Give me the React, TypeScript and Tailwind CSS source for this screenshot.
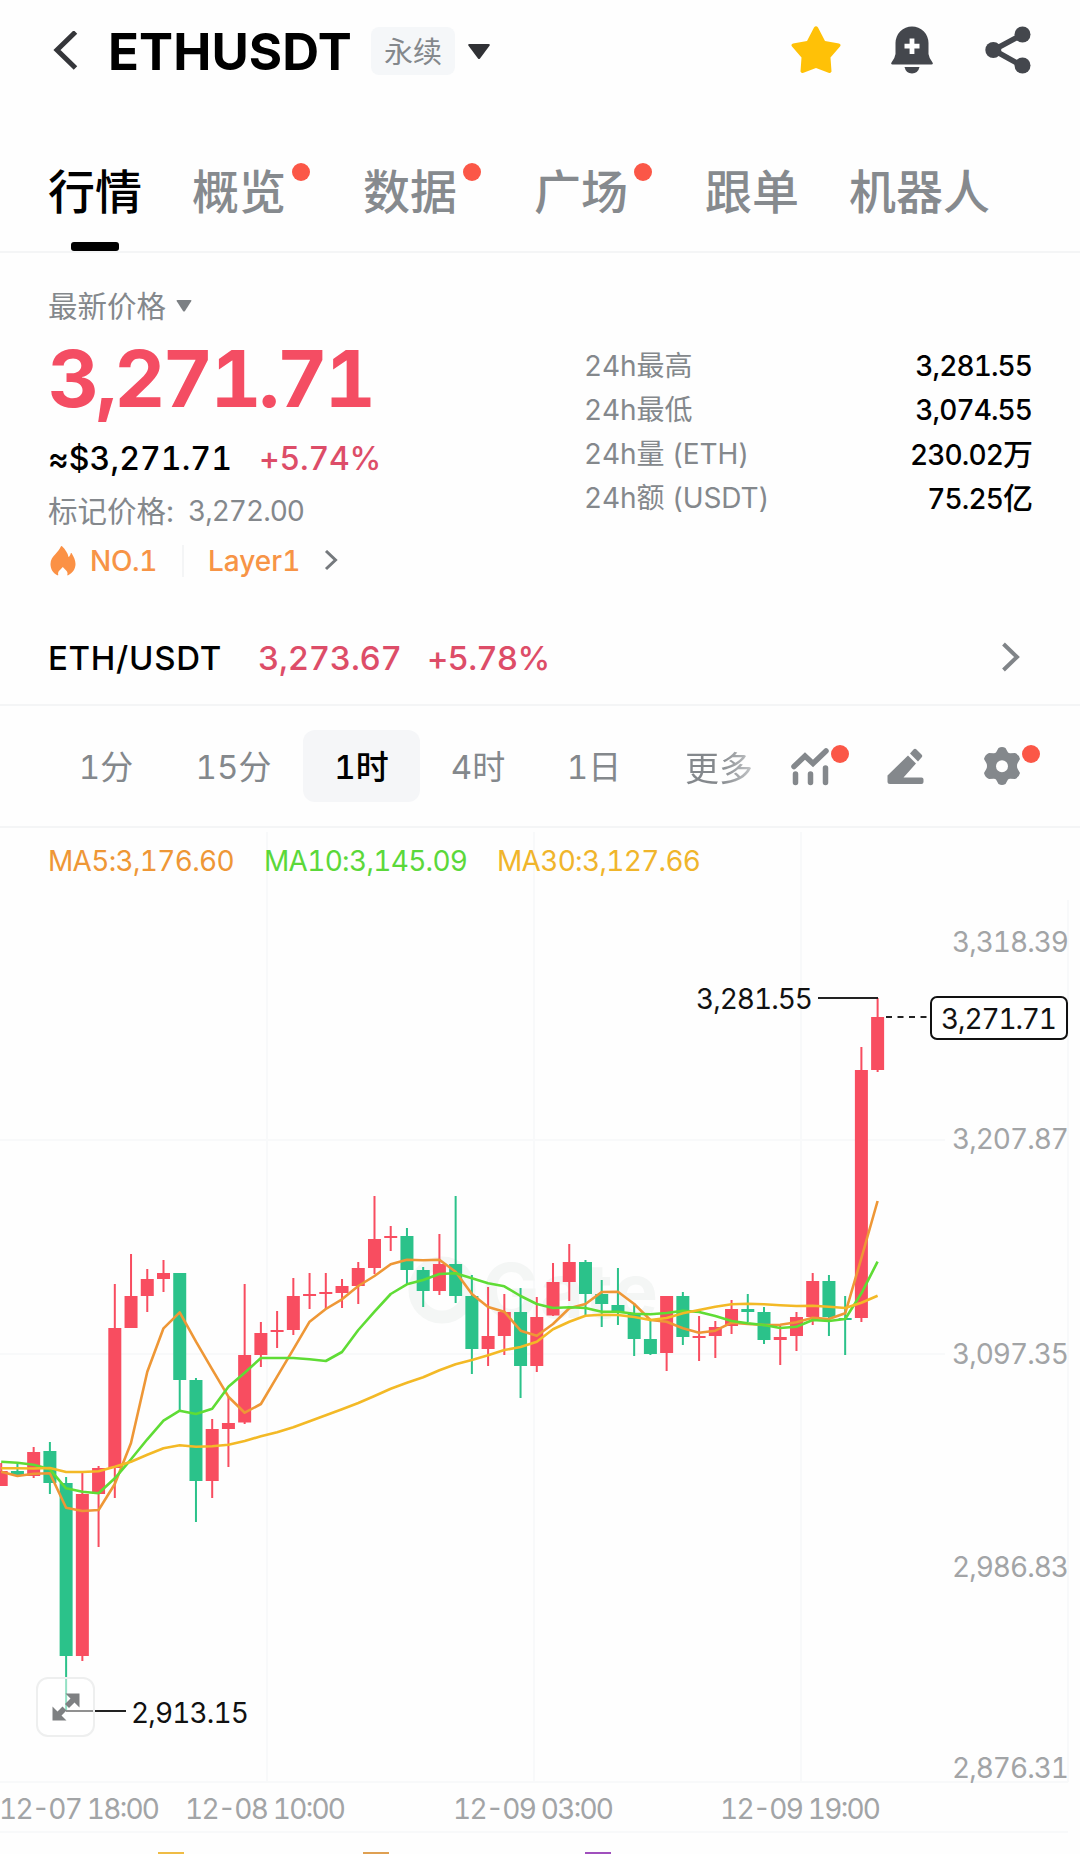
import type { ReactNode } from 'react'

type Candle = [up: boolean, high: number, top: number, bottom: number, low: number]

const RED = '#f84d60'
const GREEN = '#2bc28a'

const tabs = [
  { label: '行情', active: true },
  { label: '概览', dot: true },
  { label: '数据', dot: true },
  { label: '广场', dot: true },
  { label: '跟单' },
  { label: '机器人' },
]

const stats = [
  { label: '24h最高', value: '3,281.55' },
  { label: '24h最低', value: '3,074.55' },
  { label: '24h量 (ETH)', value: '230.02', unit: '万' },
  { label: '24h额 (USDT)', value: '75.25', unit: '亿' },
]

// true = rising (red), false = falling (green)
const candles: Candle[] = [
  [true, 1463, 1471, 1486, 1486],
  [false, 1464, 1471, 1475, 1477],
  [true, 1447, 1452, 1476, 1478],
  [false, 1442, 1451, 1483, 1494],
  [false, 1477, 1483, 1656, 1710],
  [true, 1472, 1494, 1656, 1661],
  [true, 1466, 1468, 1494, 1547],
  [true, 1284, 1328, 1468, 1498],
  [true, 1254, 1296, 1328, 1328],
  [true, 1269, 1279, 1296, 1312],
  [true, 1260, 1273, 1279, 1292],
  [false, 1273, 1273, 1380, 1410],
  [false, 1378, 1380, 1481, 1522],
  [true, 1419, 1429, 1481, 1498],
  [true, 1397, 1423, 1429, 1467],
  [true, 1284, 1355, 1422.5, 1424],
  [true, 1322, 1333, 1355, 1367],
  [true, 1311, 1330, 1332, 1348],
  [true, 1278, 1296, 1330, 1335],
  [true, 1273, 1294, 1296, 1309],
  [true, 1273, 1292, 1294, 1309],
  [true, 1279, 1286, 1293, 1308],
  [true, 1262, 1268, 1286, 1304],
  [true, 1196, 1239, 1268, 1274],
  [true, 1226, 1236, 1238, 1251],
  [false, 1228, 1236, 1270, 1284],
  [false, 1267, 1270, 1291, 1307],
  [true, 1234, 1264, 1291, 1295],
  [false, 1196, 1264, 1296, 1303],
  [false, 1275, 1296, 1349, 1374],
  [true, 1287, 1336, 1349, 1366],
  [true, 1294, 1312, 1336, 1355],
  [false, 1288, 1312, 1366, 1398],
  [true, 1297, 1317, 1366, 1372],
  [true, 1263, 1282, 1315.5, 1316],
  [true, 1244, 1262, 1282, 1301],
  [false, 1260, 1262, 1294, 1315],
  [false, 1280, 1294, 1304, 1327],
  [false, 1268, 1305, 1313, 1325],
  [false, 1303, 1313, 1339, 1356],
  [false, 1320, 1339, 1354, 1355],
  [true, 1296, 1296, 1353, 1371],
  [false, 1292, 1296, 1337, 1345],
  [true, 1316, 1336, 1338, 1361],
  [true, 1321, 1327, 1336, 1358],
  [true, 1300, 1309, 1326, 1334],
  [false, 1294, 1309, 1312, 1322],
  [false, 1307, 1312, 1340, 1344],
  [true, 1326, 1337, 1340, 1365],
  [true, 1312, 1317, 1336, 1351],
  [true, 1273, 1281, 1317, 1325],
  [false, 1275, 1281, 1317, 1336],
  [false, 1296, 1318, 1320, 1355],
  [true, 1047, 1070, 1318, 1322],
  [true, 998, 1017, 1070, 1072],
]

const ma5 = [
  1471.7, 1476, 1473.7, 1473.3, 1507.7, 1511, 1510, 1484, 1443, 1371.7, 1328.3, 1312.3, 1341.7, 1369.3, 1396.7,
  1412.7, 1404, 1376.7, 1349.3, 1321.7, 1309, 1299.3, 1286, 1276, 1264.3, 1259.7, 1260.3, 1259.7, 1271.7, 1294,
  1307, 1311.7, 1330.7, 1335.7, 1324, 1308.3, 1304, 1292, 1291.7, 1304, 1320, 1321.7, 1328.3, 1332.7, 1330.7,
  1322.7, 1324, 1325, 1324.7, 1322.3, 1317.7, 1319, 1313.3, 1258, 1201,
]

const ma10 = [
  1461.7, 1462.7, 1464.7, 1469.3, 1488.3, 1491.7, 1493.3, 1478.3, 1459.3, 1439.3, 1420.7, 1410.7, 1414, 1408.7,
  1386.7, 1372.7, 1358, 1358, 1358, 1359.3, 1361, 1352, 1330, 1311.7, 1294, 1284.3, 1280, 1274, 1273.3, 1278.3,
  1283.3, 1286.3, 1296, 1304, 1308, 1307.3, 1308, 1311.7, 1311.7, 1313.7, 1314.3, 1313, 1310.7, 1312, 1316, 1321,
  1323.3, 1325, 1328, 1326.7, 1320, 1321, 1319, 1293.3, 1261.7,
]

const ma30 = [
  1468.3, 1468.3, 1468.5, 1468, 1472, 1472, 1471.3, 1466.7, 1461.7, 1454.7, 1448.3, 1445.3, 1446.7, 1446.3, 1444.7,
  1441, 1436.3, 1432.3, 1427.3, 1421.3, 1415.3, 1409.3, 1403, 1396, 1388.7, 1382.7, 1377.3, 1370.3, 1364.3, 1360,
  1355.3, 1350, 1347, 1341.7, 1329.3, 1321.7, 1315.7, 1314.7, 1315, 1317, 1320, 1318, 1313.3, 1310, 1306.7, 1304.3,
  1303.7, 1304.3, 1305.3, 1306, 1305.7, 1306.7, 1308, 1302.7, 1295.7,
]

const xAt = (i: number) => 1.2 + i * 16.23
const toPoints = (ys: number[]) => ys.map((y, i) => `${xAt(i).toFixed(1)},${y}`).join(' ')

function Dot({ className }: { className: string }) {
  return <span className={`absolute size-[18px] rounded-full bg-[#fb5747] ${className}`} />
}

function Header() {
  return (
    <header className="flex h-[102px] items-center pr-[49px] pl-[52px]">
      <svg className="h-10 w-7" viewBox="0 0 28 40" fill="none" stroke="#35363a" strokeWidth="5">
        <path d="M23.5 1 5 19l18.5 18" />
      </svg>
      <h1 className="ml-[28px] w-[247px] text-[51px] leading-none font-bold tracking-[0.1px] text-black">ETHUSDT</h1>
      <span className="ml-4 flex h-12 w-[84px] items-center justify-center rounded-lg bg-[#f5f7f9] pt-1 text-[29px] text-[#84888c]">
        永续
      </span>
      <svg className="ml-3 h-4 w-6" viewBox="0 0 24 16" fill="#303135">
        <path d="M2.5 1h19q2 0 1 1.700L13 15.500q-1 1-2 0L1.500 2.700Q.5 1 2.500 1z" />
      </svg>

      <div className="ml-auto flex items-center pb-0.5">
        <svg className="h-12 w-[52px]" viewBox="0 0 52 48" fill="#ffc107">
          <path d="M24 1.500q2-2.500 4 0l7 13.500 14 2.500q2.500.8 1 3L40.500 31.500l1 14q-.5 2-3 1.200L26 42l-12.500 4.700q-2.500.8-3-1.200l1-14L2 20.500q-1.500-2.200 1-3L17 15z" />
        </svg>
        <svg className="ml-12 h-12 w-11" viewBox="0 0 44 48" fill="#44474d">
          <path d="M5.500 17a16.500 16.500 0 0 1 33 0v11q.5 4 4 8.500 1 1.800-1 2h-39q-2-.2-1-2 3.500-4.500 4-8.500z" />
          <path d="M14.500 41h15q-1.500 6.500-7.500 6.500T14.500 41z" />
          <path d="M22 12.500v15.500M14.500 20.200h15" stroke="#fff" strokeWidth="4.800" />
        </svg>
        <svg className="ml-[51px] h-12 w-[46px]" viewBox="0 0 46 48" fill="#44474d">
          <path d="M37.500 8.500 8.500 24l29 16" fill="none" stroke="#44474d" strokeWidth="5.500" />
          <circle cx="37.500" cy="8.500" r="8" />
          <circle cx="8.300" cy="24" r="8" />
          <circle cx="37.500" cy="39.500" r="8" />
        </svg>
      </div>
    </header>
  )
}

function Tabs() {
  return (
    <nav className="flex h-[151px] gap-[50px] border-b-2 border-[#f4f5f6] pl-12">
      {tabs.map((tab) => (
        <div
          key={tab.label}
          className={`relative flex h-full items-center pt-[30px] text-[47px] leading-none font-medium ${tab.active ? 'text-black' : 'text-[#868a8e]'} ${tab.dot ? 'pr-[27px]' : ''}`}
        >
          {tab.label}
          {tab.dot && <Dot className="top-[61px] right-[3px]" />}
          {tab.active && <span className="absolute bottom-0 left-[23px] h-[9px] w-[48px] rounded-[3px] bg-black" />}
        </div>
      ))}
    </nav>
  )
}

function PriceInfo() {
  return (
    <section className="flex justify-between pt-[31px] pr-12 pl-12">
      <div>
        <div className="flex h-11 items-center text-[29.5px] text-[#84888c]">
          最新价格
          <svg className="ml-[10px] h-3 w-4" viewBox="0 0 16 12" fill="#7c8084">
            <path d="M1.500 0h13q1.500 0 .7 1.300L9 11q-1 1.200-2 0L.8 1.300Q0 0 1.500 0z" />
          </svg>
        </div>
        <div className="flex h-[100px] items-center text-[79px] leading-none font-bold tracking-[-3px] text-[#f44d63]">
          3,271.71
        </div>
        <div className="flex h-[60px] items-center pt-0.5 text-[32px] font-medium">
          <span className="w-[211px] tracking-[0.1px] text-black">≈$3,271.71</span>
          <span className="tracking-[-0.2px] text-[#dd4d68]">+5.74%</span>
        </div>
        <div className="flex h-[46px] items-center text-[28px] text-[#84888c]">
          <span className="w-[140px] text-[29.5px]">标记价格:</span>
          <span className="tracking-[-1px]">3,272.00</span>
        </div>
        <div className="flex h-[54px] items-center text-[28px] font-medium text-[#f79446]">
          <svg className="ml-0.5 h-[30px] w-[26px]" viewBox="0 0 26 30" fill="#fb9145">
            <path d="M11 .3q.6-.6 1.300.2c3 3 5.500 6.500 6.200 10.500 1.200-.6 1.700-1.900 2.200-3.500.3-.6.800-.5 1.100 0C24 11 25.500 14.500 25.500 18c0 5-3 9-7.300 11.300-.8.3-1.100-.1-.8-.9.700-3-1.500-4-4.600-7.400-3.100 3.400-5.300 4.400-4.600 7.400.3.800-.2 1.200-1 .8C3 27 .5 23 .5 18c0-4.500 2-7 5-10 2-2.200 4-4.700 5.500-7.700z" />
          </svg>
          <span className="ml-[14px] w-[92px] tracking-[-0.3px]">NO.1</span>
          <span className="h-8 w-0.5 bg-[#f4f5f6]" />
          <span className="ml-6 w-[91px]">Layer1</span>
          <svg className="ml-6 h-[22px] w-4" viewBox="0 0 16 22" fill="none" stroke="#75797d" strokeWidth="3">
            <path d="M3 1l9.500 9L3 19" />
          </svg>
        </div>
      </div>

      <div className="mt-[60px] w-[448px]">
        {stats.map((row) => (
          <div key={row.label} className="flex h-11 items-center justify-between text-[28px]">
            <span className="tracking-[-0.1px] text-[#84888c]">{row.label}</span>
            <span className="font-medium tracking-[-0.9px] text-black">
              {row.value}
              {row.unit && <span className="text-[30px]">{row.unit}</span>}
            </span>
          </div>
        ))}
      </div>
    </section>
  )
}

function SpotRow() {
  return (
    <section className="flex h-[118px] items-center border-b-2 border-[#f4f5f6] pt-[26px] pl-12 text-[33px] font-medium">
      <span className="w-[210px] tracking-[0.7px] text-black">ETH/USDT</span>
      <span className="w-[169px] tracking-[-0.3px] text-[#dd4d68]">3,273.67</span>
      <span className="tracking-[-0.8px] text-[#dd4d68]">+5.78%</span>
      <svg className="mr-[59px] mb-1 ml-auto h-[30px] w-5" viewBox="0 0 20 30" fill="none" stroke="#808488" strokeWidth="4">
        <path d="M2.500 2 16 15 2.500 28" />
      </svg>
    </section>
  )
}

function Timeframe({ className = '', children }: { className?: string; children: ReactNode }) {
  return <span className={`flex h-[72px] items-center justify-center pt-1 text-[33px] ${className}`}>{children}</span>
}

function Toolbar() {
  return (
    <section className="flex h-[122px] items-center border-b-2 border-[#f4f5f6] pl-12 text-[#84888c]">
      <Timeframe className="w-[116px]">1分</Timeframe>
      <Timeframe className="w-[139px]">15分</Timeframe>
      <Timeframe className="w-[117px] rounded-xl bg-[#f5f6f8] font-medium text-black">1时</Timeframe>
      <Timeframe className="w-[116px]">4时</Timeframe>
      <Timeframe className="w-[116px]">1日</Timeframe>
      <Timeframe className="w-[134px]">
        <span className="bg-linear-to-r from-[#84888c] from-50% to-[#c4c6c8] bg-clip-text text-[34px] text-transparent">
          更多
        </span>
      </Timeframe>

      <div className="relative ml-[5px]">
        <svg className="h-10 w-10" viewBox="0 0 40 40" fill="none" stroke="#84888c" strokeWidth="5.500">
          <path d="M3 20.500 14 10l8 7.500L35 5" strokeWidth="5.500" strokeLinecap="round" />
          <path d="M4.500 28v8.500M19.500 28v8.500M34.500 22v14.500" strokeLinecap="round" />
        </svg>
        <Dot className="top-[-1px] left-[40px]" />
      </div>
      <svg className="ml-[55px] h-10 w-10" viewBox="0 0 40 40" fill="#84888c">
        <path d="M22 9.500 30 17.500 17.500 31.500h18q2 0 2 2v2.500q0 2-2 2H4q-2.500 0-2.500-2.500v-6zM24 7.500l3.500-4q1.500-1.500 3 0l5 5q1.500 1.500 0 3L32 15.500z" />
      </svg>
      <div className="relative ml-[56px]">
        <svg className="h-10 w-10" viewBox="0 0 40 40" fill="#84888c" fillRule="evenodd">
          <path d="M16.500 2q3.500-2 7 0l2.500 4.500q1 1 2.500.8L33 7q4 1.500 5 6l-2.300 4q-.7 1.200-.7 3t.7 3l2.300 4q-1 4.500-5 6l-4.500-.3q-1.500-.2-2.500.8L23.500 38q-3.500 2-7 0L14 33.500q-1-1-2.500-.8L7 33q-4-1.500-5-6l2.300-4q.7-1.200.7-3t-.7-3L2 13q1-4.500 5-6l4.500.3q1.500.2 2.500-.8zM20 14.200a6 6 0 1 0 0 12 6 6 0 1 0 0-12z" />
        </svg>
        <Dot className="top-[-1px] left-[40px]" />
      </div>
    </section>
  )
}

function Chart() {
  return (
    <section className="relative">
      <svg className="block" width="1080" height="1026" viewBox="0 828 1080 1026" fontSize="28">
        <g stroke="#f8f9fa" strokeWidth="2">
          <path d="M267 832v950M534 832v950M801 832v950M1068 900v882" />
          <path d="M0 1140h945M0 1354h945M0 1782h1068M0 1832h1068" />
        </g>

        {/* watermark */}
        <g fill="#f4f6f5">
          <circle cx="442" cy="1290" r="27" fill="none" stroke="#f4f6f5" strokeWidth="13" />
          <text x="482" y="1318" fontSize="76" fontWeight="700" textLength="176">
            Gate
          </text>
        </g>

        {candles.map(([up, high, top, bottom, low], i) => (
          <g key={i} fill={up ? RED : GREEN}>
            <rect x={xAt(i) - 1} y={high} width="2" height={low - high} />
            <rect x={xAt(i) - 6.5} y={top} width="13" height={bottom - top} />
          </g>
        ))}

        <g fill="none" strokeWidth="2.600" strokeLinejoin="round">
          <polyline points={toPoints(ma5)} stroke="#ee9736" />
          <polyline points={toPoints(ma10)} stroke="#5fdc35" />
          <polyline points={toPoints(ma30)} stroke="#f3b926" />
        </g>

        <g stroke="#222" strokeWidth="2">
          <path d="M818 998h60M66 1711h60" />
          <path d="M886 1017h44" strokeDasharray="6 5.500" />
        </g>
        <rect x="931" y="997" width="136" height="42" rx="6" fill="#fff" stroke="#111" strokeWidth="2" />
        <g fill="#111">
          <text x="696" y="1009" textLength="117">3,281.55</text>
          <text x="941" y="1029" textLength="116">3,271.71</text>
          <text x="131" y="1723" textLength="118">2,913.15</text>
        </g>

        <g fill="#a2a4a6">
          <text x="952" y="952" textLength="117">3,318.39</text>
          <text x="952" y="1149" textLength="117">3,207.87</text>
          <text x="952" y="1364" textLength="117">3,097.35</text>
          <text x="952" y="1577" textLength="117">2,986.83</text>
          <text x="952" y="1778" textLength="117">2,876.31</text>
          <text x="-1" y="1819" textLength="161">12-07 18:00</text>
          <text x="185" y="1819" textLength="161">12-08 10:00</text>
          <text x="453" y="1819" textLength="161">12-09 03:00</text>
          <text x="720" y="1819" textLength="161">12-09 19:00</text>
        </g>

        {/* top edge of the sub chart legend */}
        <path d="M158 1853h26" stroke="#efbc45" strokeWidth="2" />
        <path d="M363 1853h26" stroke="#dfa052" strokeWidth="2" />
        <path d="M585 1853h26" stroke="#a050bd" strokeWidth="2" />
      </svg>

      <div className="absolute top-[15px] left-12 flex h-9 items-center text-[28px] tracking-[-0.7px]">
        <span className="w-[216px] text-[#ee9736]">MA5:3,176.60</span>
        <span className="w-[233px] text-[#5bd83a]">MA10:3,145.09</span>
        <span className="text-[#f0b52b]">MA30:3,127.66</span>
      </div>

      <div className="absolute top-[849px] left-[36px] flex h-[60px] w-[59px] items-center justify-center rounded-xl border-2 border-[#eeefef] bg-white/50">
        <svg className="h-7 w-7" viewBox="0 0 28 28" fill="#7e8082">
          <path d="M13.500.5h14v14l-5-5-5.500 5.500-4-4 5.500-5.500zM.5 13.500v14h14l-5-5 5-5-4-4-5 5z" />
        </svg>
      </div>
    </section>
  )
}

export default function App() {
  return (
    <main className="h-[1854px] w-[1080px] overflow-hidden bg-[#fefefe] font-[Inter,'Noto_Sans_CJK_SC',sans-serif] tabular-nums">
      <Header />
      <Tabs />
      <PriceInfo />
      <SpotRow />
      <Toolbar />
      <Chart />
    </main>
  )
}
